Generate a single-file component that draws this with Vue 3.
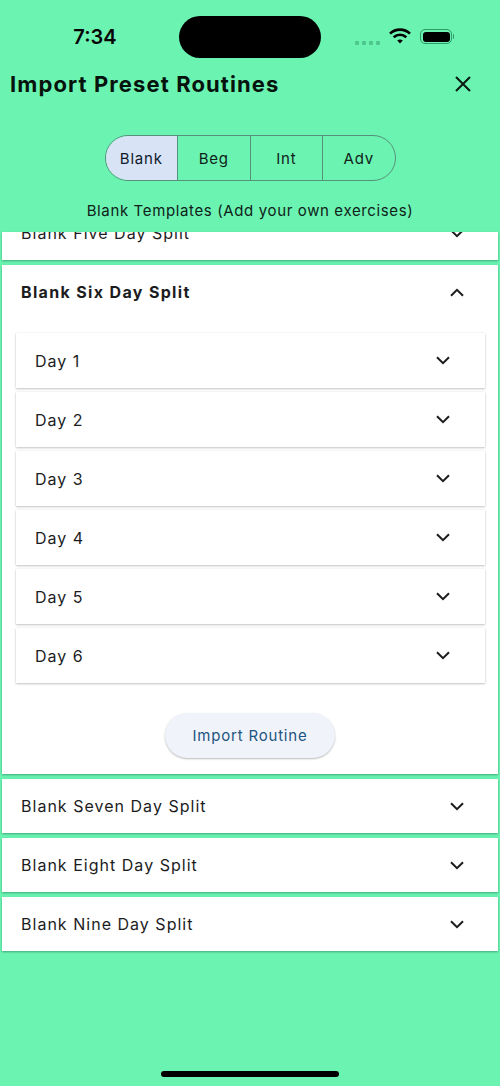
<script setup>
const tabs = ['Blank', 'Beg', 'Int', 'Adv']
const days = ['Day 1', 'Day 2', 'Day 3', 'Day 4', 'Day 5', 'Day 6']
const closedRoutines = ['Blank Seven Day Split', 'Blank Eight Day Split', 'Blank Nine Day Split']
</script>

<template>
  <div class="screen">
    <header class="top">
      <div class="status">
        <span class="time">7:34</span>
        <div class="island"></div>
        <div class="status-icons">
          <div class="dots"><i></i><i></i><i></i><i></i></div>
          <svg class="wifi" viewBox="0 0 22 16" width="22" height="16">
            <path d="M1 5.6 A14.5 14.5 0 0 1 21 5.6" fill="none" stroke="#000" stroke-width="2.6"/>
            <path d="M4.7 9.2 A9.3 9.3 0 0 1 17.3 9.2" fill="none" stroke="#000" stroke-width="2.6"/>
            <path d="M8.2 12.6 A4.4 4.4 0 0 1 13.8 12.6 L11 15.6 Z" fill="#000"/>
          </svg>
          <div class="battery"><div class="battery-fill"></div></div>
        </div>
      </div>
      <div class="title-row">
        <h1>Import Preset Routines</h1>
        <svg class="close" viewBox="0 0 16 16" width="16" height="16">
          <path d="M1 1 L15 15 M15 1 L1 15" stroke="#0a1a12" stroke-width="2" fill="none"/>
        </svg>
      </div>
      <div class="seg-wrap">
        <div class="seg">
          <div v-for="(t, i) in tabs" :key="t" class="seg-item" :class="{ active: i === 0 }">{{ t }}</div>
        </div>
      </div>
      <p class="sub">Blank Templates (Add your own exercises)</p>
    </header>

    <div class="list">
      <section class="card clipped">
        <div class="row shifted">
          <span>Blank Five Day Split</span>
          <svg class="chev" viewBox="0 0 14 9" width="14" height="9"><path d="M1 1.2 L7 7.2 L13 1.2" /></svg>
        </div>
      </section>

      <section class="card open">
        <div class="row">
          <strong>Blank Six Day Split</strong>
          <svg class="chev" viewBox="0 0 14 9" width="14" height="9"><path d="M1 7.8 L7 1.8 L13 7.8" /></svg>
        </div>
        <div class="days">
          <div v-for="d in days" :key="d" class="day">
            <span>{{ d }}</span>
            <svg class="chev" viewBox="0 0 14 9" width="14" height="9"><path d="M1 1.2 L7 7.2 L13 1.2" /></svg>
          </div>
        </div>
        <div class="action">
          <button class="import">Import Routine</button>
        </div>
      </section>

      <section v-for="r in closedRoutines" :key="r" class="card">
        <div class="row">
          <span>{{ r }}</span>
          <svg class="chev" viewBox="0 0 14 9" width="14" height="9"><path d="M1 1.2 L7 7.2 L13 1.2" /></svg>
        </div>
      </section>
    </div>

    <div class="home-bar"></div>
  </div>
</template>

<style>
html, body { margin: 0; padding: 0; }
</style>

<style scoped>
.screen {
  position: relative;
  width: 500px;
  height: 1086px;
  overflow: hidden;
  background: #6bf3b1;
  font-family: Inter, "Liberation Sans", sans-serif;
  color: #1c1c1e;
}
.top {
  height: 232px;
  box-sizing: border-box;
  display: flex;
  flex-direction: column;
}
.status {
  height: 57px;
  padding-top: 16px;
  box-sizing: border-box;
  display: flex;
  align-items: flex-start;
}
.time {
  width: 179px;
  padding-top: 9px;
  padding-left: 11px;
  box-sizing: border-box;
  text-align: center;
  font-size: 20px;
  line-height: 24px;
  font-weight: 600;
  color: #050505;
}
.island {
  width: 142px;
  height: 42px;
  border-radius: 21px;
  background: #000;
}
.status-icons {
  display: flex;
  align-items: flex-start;
  padding-left: 34px;
}
.dots {
  display: flex;
  gap: 3px;
  margin-top: 25px;
}
.dots i {
  display: block;
  width: 4px;
  height: 4px;
  border-radius: 1px;
  background: #4cc78f;
}
.wifi {
  margin-left: 9px;
  margin-top: 12px;
}
.battery {
  position: relative;
  margin-left: 9px;
  margin-top: 13px;
  width: 32px;
  height: 15px;
  box-sizing: border-box;
  border: 1px solid #2f9a6a;
  border-radius: 5px;
  padding: 1.5px;
}
.battery::after {
  content: "";
  position: absolute;
  right: -3px;
  top: 4px;
  width: 1.5px;
  height: 5px;
  border-radius: 0 2px 2px 0;
  background: #2f9a6a;
}
.battery-fill {
  width: 100%;
  height: 100%;
  background: #000;
  border-radius: 3px;
}
.title-row {
  height: 54px;
  display: flex;
  align-items: center;
  justify-content: space-between;
  padding: 0 29px 0 10px;
}
h1 {
  margin: 0;
  font-size: 22px;
  line-height: 28px;
  font-weight: 700;
  letter-spacing: 1.1px;
  color: #06130d;
}
.seg-wrap {
  display: flex;
  justify-content: center;
  margin-top: 24px;
}
.seg {
  display: flex;
  width: 291px;
  height: 46px;
  box-sizing: border-box;
  border: 1px solid #55917a;
  border-radius: 23px;
  overflow: hidden;
}
.seg-item {
  flex: 1;
  display: flex;
  align-items: center;
  justify-content: center;
  font-size: 15px;
  letter-spacing: 0.8px;
  color: #0f2219;
  border-left: 1px solid #55917a;
}
.seg-item:first-child { border-left: 0; }
.seg-item.active {
  background: #d8e3f6;
  color: #101a2a;
}
.sub {
  margin: 21px 0 0;
  text-align: center;
  font-size: 15px;
  line-height: 18px;
  letter-spacing: 0.63px;
  color: #0f2219;
}
.list {
  display: flex;
  flex-direction: column;
  gap: 5px;
  padding: 0 2px;
}
.card {
  background: #fff;
  box-shadow: 0 1px 2px rgba(30, 110, 75, 0.55);
}
.clipped {
  height: 28px;
  overflow: hidden;
  flex: none;
}
.row {
  height: 54px;
  box-sizing: border-box;
  display: flex;
  align-items: center;
  justify-content: space-between;
  padding: 0 34px 0 19px;
  font-size: 16px;
  letter-spacing: 1.02px;
  color: #1c1c1e;
}
.shifted { margin-top: -26px; }
.row strong {
  font-weight: 700;
  letter-spacing: 1.34px;
}
.days {
  margin-top: 14px;
  padding: 0 13px 0 14px;
  display: flex;
  flex-direction: column;
  gap: 4px;
}
.day {
  height: 55px;
  box-sizing: border-box;
  display: flex;
  align-items: center;
  justify-content: space-between;
  padding: 0 35px 0 19px;
  background: #fff;
  font-size: 16px;
  letter-spacing: 1px;
  box-shadow: 0 1px 2px rgba(0, 0, 0, 0.22), 0 0 2px rgba(0, 0, 0, 0.08);
}
.chev {
  flex: none;
  fill: none;
  stroke: #1c1c1e;
  stroke-width: 2;
}
.action {
  display: flex;
  justify-content: center;
  padding: 30px 0 16px;
}
.import {
  width: 170px;
  height: 45px;
  border: 0;
  border-radius: 23px;
  background: #f1f3fa;
  color: #1c5580;
  font-family: inherit;
  font-size: 15px;
  letter-spacing: 0.8px;
  box-shadow: 0 1px 2px rgba(0, 0, 0, 0.28);
}
.home-bar {
  position: absolute;
  left: 161px;
  bottom: 9px;
  width: 178px;
  height: 6px;
  border-radius: 3px;
  background: #000;
}
</style>
